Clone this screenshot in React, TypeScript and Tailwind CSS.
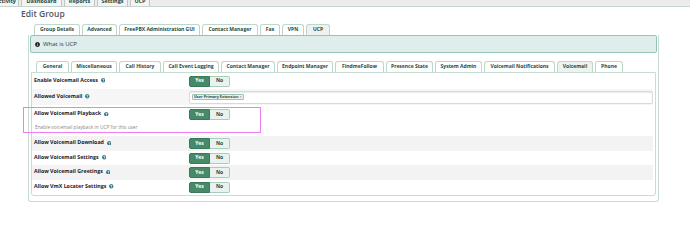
import React from "react";
import { FaInfoCircle, FaQuestionCircle } from "react-icons/fa";

const navTabs = [
  { label: "Activity", cls: "w-[27px] -ml-[8px]" },
  { label: "Dashboard", cls: "w-[41px]" },
  { label: "Reports", cls: "w-[31px]" },
  { label: "Settings", cls: "w-[31px]" },
  { label: "UCP", cls: "w-[20px]" },
];

const groupTabs = [
  { label: "Group Details", cls: "w-[46px]" },
  { label: "Advanced", cls: "w-[35px]" },
  { label: "FreePBX Administration GUI", cls: "w-[81px]" },
  { label: "Contact Manager", cls: "w-[56px]" },
  { label: "Fax", cls: "w-[20px]" },
  { label: "VPN", cls: "w-[22px]" },
  { label: "UCP", cls: "w-[24px]", active: true },
];

const ucpTabs = [
  { label: "General", cls: "w-[33px]" },
  { label: "Miscellaneous", cls: "w-[46px]" },
  { label: "Call History", cls: "w-[42px]" },
  { label: "Call Event Logging", cls: "w-[56px]" },
  { label: "Contact Manager", cls: "w-[54px]" },
  { label: "Endpoint Manager", cls: "w-[56px]" },
  { label: "FindmeFollow", cls: "w-[49px]" },
  { label: "Presence State", cls: "w-[47px]" },
  { label: "System Admin", cls: "w-[47px]" },
  { label: "Voicemail Notifications", cls: "w-[71px]" },
  { label: "Voicemail", cls: "w-[36px]", active: true },
  { label: "Phone", cls: "w-[28px]" },
];

type Tab = { label: string; cls: string; active?: boolean };

const TabRow = ({ tabs }: { tabs: Tab[] }) => (
  <div className="flex h-[11px] items-end gap-[2px]">
    {tabs.map((t) => (
      <div
        key={t.label}
        className={`${t.cls} flex h-[11px] shrink-0 items-center justify-center whitespace-nowrap rounded-t-[3px] border border-b-0 border-[#bcd8cb] text-[5px] font-bold text-[#1f4a43] ${
          t.active ? "bg-[#eef3f1]" : "bg-white"
        }`}
      >
        {t.label}
      </div>
    ))}
  </div>
);

const Help = () => <FaQuestionCircle className="ml-[3px] shrink-0 text-[#2a6f7f]" size={4.5} />;

const Toggle = () => (
  <div className="flex h-[11px] w-[41px] shrink-0 text-[5px] font-bold">
    <div className="flex w-[21px] items-center justify-center rounded-l-[2px] border border-[#37795a] bg-[#468a67] text-white">
      Yes
    </div>
    <div className="flex w-[20px] items-center justify-center rounded-r-[2px] border border-l-0 border-[#a8cdbb] bg-[#e8f2ee] text-[#1f4a43]">
      No
    </div>
  </div>
);

const Label = ({ text }: { text: string }) => (
  <div className="flex w-[157px] shrink-0 items-center pl-[2px] text-[5.3px] font-bold text-[#222]">
    <span className="whitespace-nowrap">{text}</span>
    <Help />
  </div>
);

const ToggleRow = ({ text, gray, h }: { text: string; gray?: boolean; h: string }) => (
  <div className={`${h} flex items-center ${gray ? "bg-[#f3f3f3]" : "bg-white"}`}>
    <div className="-mt-[1px]">
      <Label text={text} />
    </div>
    <Toggle />
  </div>
);

export default function App() {
  return (
    <div className="relative h-[233px] w-[690px] overflow-hidden bg-white font-['Open_Sans','Liberation_Sans',sans-serif]">
      {/* top nav, cut off by the screenshot */}
      <div className="flex h-[7px] items-end gap-[2px] overflow-hidden border-b border-[#c4d3cc] bg-[#ececec]">
        {navTabs.map((t) => (
          <div
            key={t.label}
            className={`${t.cls} flex h-[11px] shrink-0 items-center justify-center rounded-t-[3px] border border-b-0 border-[#b9c9c1] bg-[#f4f4f4] text-[5.5px] font-bold text-[#1f4a43]`}
          >
            {t.label}
          </div>
        ))}
      </div>

      <div className="ml-[21px] mt-[2px] text-[8.5px] font-semibold leading-[10px] text-[#555]">Edit Group</div>

      <div className="ml-[28px] mt-[5px] w-[631px]">
        <div className="pl-[6px]">
          <TabRow tabs={groupTabs} />
        </div>
        <div className="rounded-b-[3px] border border-t-0 border-[#c5ddd2] px-[1px] pb-[5px]">
          <div className="flex h-[18px] items-center rounded-[2px] border border-[#93c6b2] bg-[#dfeeec] pl-[4px] text-[6px] text-[#333]">
            <FaInfoCircle className="mr-[3px] text-[#222]" size={5} />
            What is UCP
          </div>

          <div className="mt-[8px] pl-[6px]">
            <TabRow tabs={ucpTabs} />
          </div>
          <div className="ml-[1px] mr-[1px] rounded-b-[3px] border border-[#c5ddd2] pb-[1px] pr-[2px]">
            <ToggleRow text="Enable Voicemail Access" h="h-[16px]" />

            <div className="flex h-[16px] items-center bg-[#f6f6f6]">
              <div className="-mt-[1px]">
                <Label text="Allowed Voicemail" />
              </div>
              <div className="flex h-[13px] flex-1 items-center rounded-[2px] border border-[#d9d9d9] bg-white pl-[2px] shadow-[inset_0_1px_1px_rgba(0,0,0,0.08)]">
                <div className="flex h-[6px] items-center rounded-[1px] border border-[#9cc3af] bg-[#e9f3ee] px-[1px] text-[3.8px] font-bold leading-none text-[#1f4a43]">
                  User Primary Extension <span className="ml-[1px] font-normal text-[#555]">×</span>
                </div>
              </div>
            </div>

            <div className="h-[31px] bg-white pt-[4px]">
              <div className="flex items-center">
                <div className="-mt-[1px]">
                  <Label text="Allow Voicemail Playback" />
                </div>
                <Toggle />
              </div>
              <div className="mt-[4px] pl-[3px] text-[4.8px] text-[#888]">Enable voicemail playback in UCP for this user</div>
            </div>

            <ToggleRow text="Allow Voicemail Download" gray h="h-[15px]" />
            <ToggleRow text="Allow Voicemail Settings" h="h-[14px]" />
            <ToggleRow text="Allow Voicemail Greetings" gray h="h-[15px]" />
            <ToggleRow text="Allow VmX Locater Settings" h="h-[14px]" />
          </div>
        </div>
      </div>

      {/* annotation box drawn over the screenshot */}
      <div className="pointer-events-none absolute left-[23px] top-[107px] h-[26px] w-[238px] border border-[#f07cf0]" />
    </div>
  );
}
